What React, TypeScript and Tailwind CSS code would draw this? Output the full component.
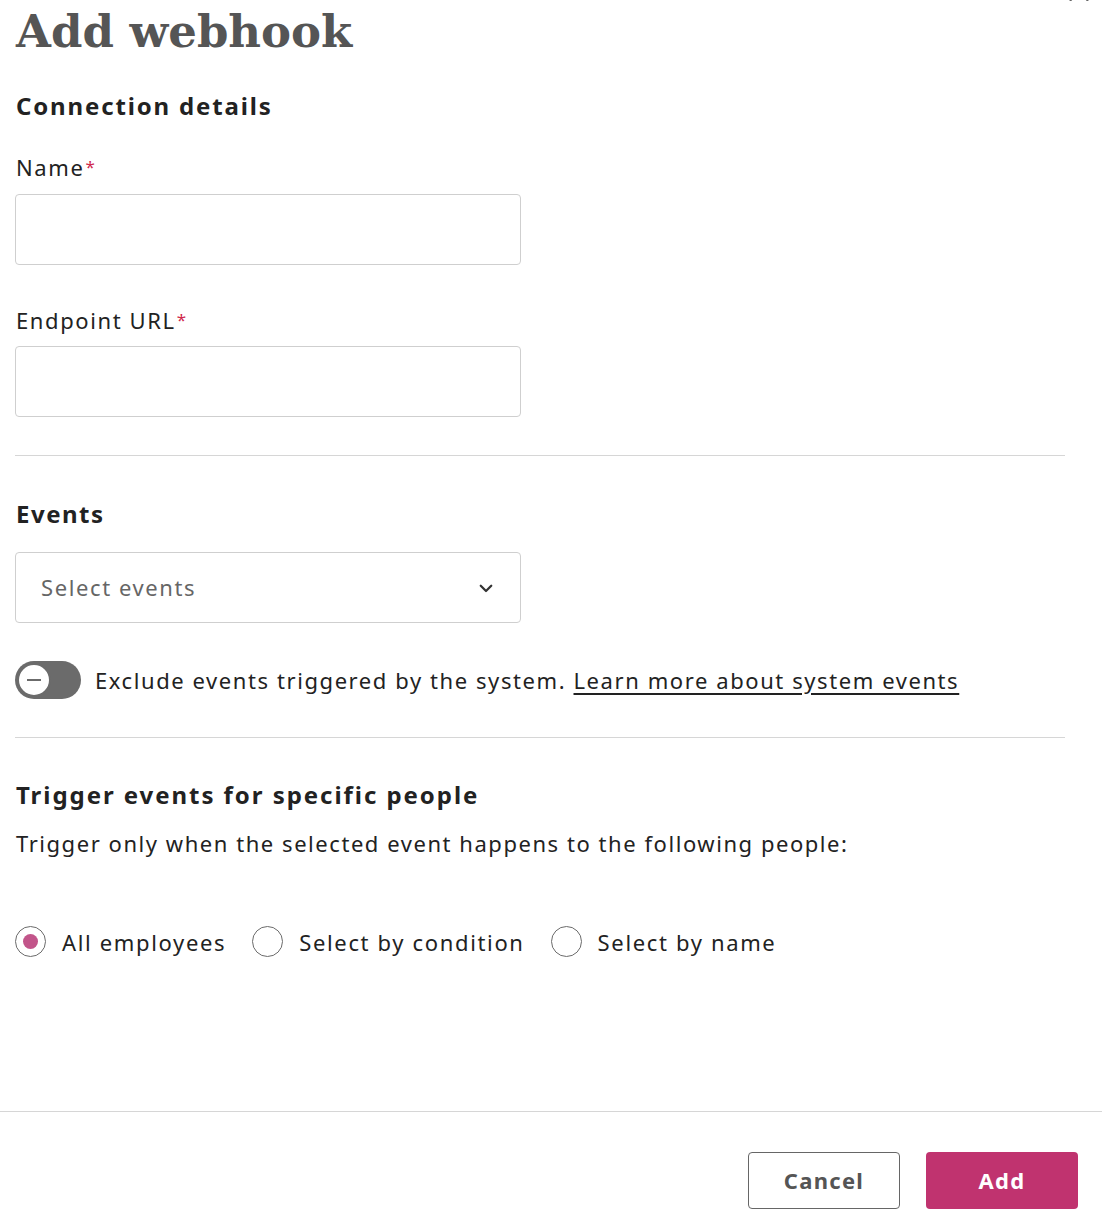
import React, { useState } from 'react'

const body = { fontFamily: '"Noto Sans", "Open Sans", sans-serif' }

const Label: React.FC<{ text: string; required?: boolean }> = ({ text, required }) => (
  <label className="block text-[22px] leading-[28px] tracking-[1.6px] text-[#222]">
    {text}
    {required && <span className="ml-[1px] align-top text-[17px] tracking-normal text-[#d0284c]">*</span>}
  </label>
)

const Radio: React.FC<{ label: string; checked: boolean; onClick: () => void }> = ({ label, checked, onClick }) => (
  <button type="button" onClick={onClick} className="flex items-center gap-4">
    <span className="flex h-[31px] w-[31px] items-center justify-center rounded-full border border-[#6b6b6b] bg-white">
      {checked && <span className="h-[15px] w-[15px] rounded-full bg-[#c2558a]" />}
    </span>
    <span className="text-[22px] leading-[30px] tracking-[1.65px] text-[#222]">{label}</span>
  </button>
)

export default function App() {
  const [who, setWho] = useState('all')
  const [exclude, setExclude] = useState(false)

  return (
    <div className="relative flex min-h-[1226px] w-[1102px] flex-col overflow-hidden bg-white" style={body}>
      {/* close button, mostly scrolled out of view */}
      <button type="button" className="absolute left-[1067px] top-[-21px]">
        <svg width="24" height="22" viewBox="0 0 24 22" fill="none" stroke="#666" strokeWidth="2">
          <path d="M3 1l18 21M21 1L3 22" />
        </svg>
      </button>

      <div className="flex-1 px-4">
        <h1
          className="pt-[4px] text-[45px] font-bold leading-[56px] text-[#555]"
          style={{ fontFamily: '"DejaVu Serif", serif' }}
        >
          Add webhook
        </h1>

        <h2 className="mt-[30px] text-[24px] font-bold leading-[32px] tracking-[1.85px] text-[#222]">
          Connection details
        </h2>

        <div className="mt-[31px]">
          <Label text="Name" required />
          <input className="mt-[13px] h-[71px] w-[506px] -translate-x-px rounded-[4px] border border-[#cfcfcf] px-6 text-[22px] outline-none" />
        </div>

        <div className="mt-[41px]">
          <Label text="Endpoint URL" required />
          <input className="mt-[12px] h-[71px] w-[506px] -translate-x-px rounded-[4px] border border-[#cfcfcf] px-6 text-[22px] outline-none" />
        </div>

        <div className="mt-[38px] w-[1050px] -translate-x-px border-t border-[#d6d6d6]" />

        <h2 className="mt-[42px] text-[24px] font-bold leading-[32px] tracking-[1.5px] text-[#222]">Events</h2>

        <button
          type="button"
          className="mt-[22px] flex h-[71px] w-[506px] -translate-x-px items-center justify-between rounded-[4px] border border-[#cfcfcf] pl-[25px] pr-[25px]"
        >
          <span className="text-[22px] tracking-[1.6px] text-[#666]">Select events</span>
          <svg width="18" height="18" viewBox="0 0 24 24" fill="none" stroke="#333" strokeWidth="3" strokeLinecap="round" strokeLinejoin="round">
            <path d="M5 9l7 7 7-7" />
          </svg>
        </button>

        <div className="mt-[38px] flex items-center gap-[13px]">
          <button
            type="button"
            onClick={() => setExclude(!exclude)}
            className="flex h-[38px] w-[66px] -translate-x-px items-center rounded-full bg-[#6b6b6b] px-[2px]"
          >
            <span className="flex h-[34px] w-[34px] items-center justify-center rounded-full border-2 border-[#6b6b6b] bg-white">
              <span className="h-[2px] w-[14px] bg-[#6b6b6b]" />
            </span>
          </button>
          <p className="text-[22px] leading-[30px] tracking-[1.58px] text-[#222]">
            Exclude events triggered by the system.{' '}
            <a href="#" className="underline underline-offset-[4px]">
              Learn more about system events
            </a>
          </p>
        </div>

        <div className="mt-[38px] w-[1050px] -translate-x-px border-t border-[#d6d6d6]" />

        <h2 className="mt-[41px] text-[24px] font-bold leading-[32px] tracking-[1.95px] text-[#222]">
          Trigger events for specific people
        </h2>
        <p className="mt-[17px] text-[22px] leading-[30px] tracking-[1.55px] text-[#222]">
          Trigger only when the selected event happens to the following people:
        </p>

        <div className="mt-[68px] flex -translate-x-px items-center gap-[26px]">
          <Radio label="All employees" checked={who === 'all'} onClick={() => setWho('all')} />
          <Radio label="Select by condition" checked={who === 'condition'} onClick={() => setWho('condition')} />
          <Radio label="Select by name" checked={who === 'name'} onClick={() => setWho('name')} />
        </div>
      </div>

      <div className="mt-auto border-t border-[#d6d6d6]">
        <div className="flex justify-end gap-[26px] pb-[17px] pr-[24px] pt-[40px]">
          <button
            type="button"
            className="h-[57px] w-[152px] rounded-[4px] border border-[#666] bg-white text-[22px] font-bold tracking-[1.3px] text-[#555]"
          >
            Cancel
          </button>
          <button
            type="button"
            className="h-[57px] w-[152px] rounded-[4px] bg-[#c0336f] text-[22px] font-bold tracking-[1.3px] text-white"
          >
            Add
          </button>
        </div>
      </div>
    </div>
  )
}
